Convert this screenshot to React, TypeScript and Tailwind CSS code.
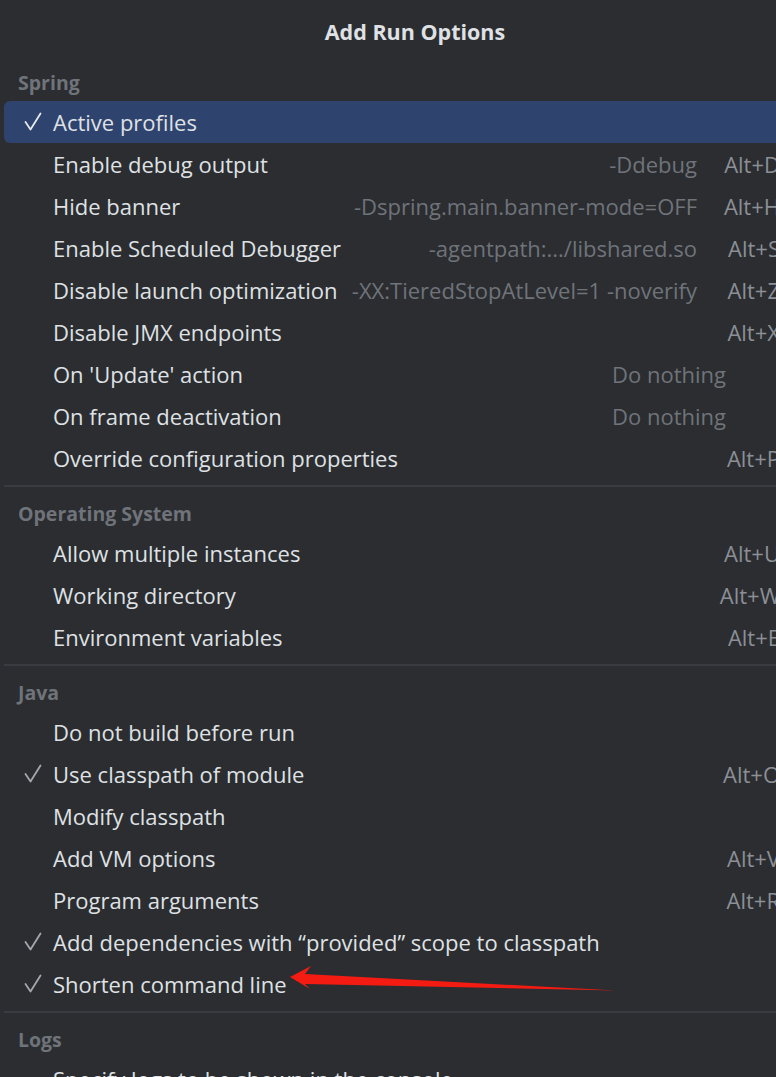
import type { ReactNode } from 'react'

type Item = {
  label: string
  hint?: string
  shortcut?: string
  value?: string
  checked?: boolean
  selected?: boolean
}

type Section = { title: string; items: Item[] }

const sections: Section[] = [
  {
    title: 'Spring',
    items: [
      { label: 'Active profiles', checked: true, selected: true },
      { label: 'Enable debug output', hint: '-Ddebug', shortcut: 'Alt+D' },
      { label: 'Hide banner', hint: '-Dspring.main.banner-mode=OFF', shortcut: 'Alt+H' },
      { label: 'Enable Scheduled Debugger', hint: '-agentpath:.../libshared.so', shortcut: 'Alt+S' },
      { label: 'Disable launch optimization', hint: '-XX:TieredStopAtLevel=1 -noverify', shortcut: 'Alt+Z' },
      { label: 'Disable JMX endpoints', shortcut: 'Alt+X' },
      { label: "On 'Update' action", value: 'Do nothing' },
      { label: 'On frame deactivation', value: 'Do nothing' },
      { label: 'Override configuration properties', shortcut: 'Alt+P' },
    ],
  },
  {
    title: 'Operating System',
    items: [
      { label: 'Allow multiple instances', shortcut: 'Alt+U' },
      { label: 'Working directory', shortcut: 'Alt+W' },
      { label: 'Environment variables', shortcut: 'Alt+E' },
    ],
  },
  {
    title: 'Java',
    items: [
      { label: 'Do not build before run' },
      { label: 'Use classpath of module', checked: true, shortcut: 'Alt+O' },
      { label: 'Modify classpath' },
      { label: 'Add VM options', shortcut: 'Alt+V' },
      { label: 'Program arguments', shortcut: 'Alt+R' },
      { label: 'Add dependencies with \u201Cprovided\u201D scope to classpath', checked: true },
      { label: 'Shorten command line', checked: true },
    ],
  },
  {
    title: 'Logs',
    items: [{ label: 'Specify logs to be shown in the console' }],
  },
]

function Check({ light }: { light?: boolean }) {
  return (
    <svg width="18" height="20" viewBox="0 0 18 20" className="ml-[20px]">
      <polyline
        points="1.5,10 6.5,17.5 16.5,1.5"
        fill="none"
        stroke={light ? '#e6e8ec' : '#a4a7ad'}
        strokeWidth="1.8"
        strokeLinecap="round"
        strokeLinejoin="round"
      />
    </svg>
  )
}

function Row({ item }: { item: Item }) {
  return (
    <div
      className={`ml-[4px] mr-[44px] h-[42px] flex items-center rounded-[6px] ${
        item.selected ? 'bg-[#2e436e]' : ''
      }`}
    >
      <div className="w-[49px] flex items-center">{item.checked && <Check light={item.selected} />}</div>
      <span className="text-[#dfe1e5] whitespace-nowrap">{item.label}</span>
      <div className="flex-1" />
      {item.value ? (
        <span className="text-[#6f737a] whitespace-nowrap mr-[60px]">{item.value}</span>
      ) : (
        <>
          {item.hint && <span className="text-[#6f737a] whitespace-nowrap mr-[3px]">{item.hint}</span>}
          <span className="w-[86px] pr-[6px] text-right text-[#8c8f96] whitespace-nowrap">
            {item.shortcut}
          </span>
        </>
      )}
    </div>
  )
}

function SectionBlock({ section, last }: { section: Section; last: boolean }): ReactNode {
  return (
    <div>
      <div className="h-[43px] pt-[12px] pl-[18px] leading-[26px] text-[19.5px] font-bold text-[#6f737a]">
        {section.title}
      </div>
      {section.items.map(item => (
        <Row key={item.label} item={item} />
      ))}
      {!last && (
        <div className="pt-[6px] pb-[2px]">
          <div className="ml-[4px] h-[2px] bg-[#393b40]" />
        </div>
      )}
    </div>
  )
}

export default function App() {
  return (
    <div
      className="relative min-h-screen h-[1077px] bg-[#2b2d30] overflow-hidden text-[22px]"
      style={{ fontFamily: '"Open Sans", "Noto Sans", sans-serif' }}
    >
      <div className="w-[830px]">
        <div className="h-[58px] pt-[18px] text-center leading-[28px] text-[21.5px] font-bold text-[#dfe1e5]">
          Add Run Options
        </div>
        {sections.map((s, i) => (
          <SectionBlock key={s.title} section={s} last={i === sections.length - 1} />
        ))}
      </div>

      {/* annotation arrow */}
      <svg className="absolute left-0 top-0 pointer-events-none" width="776" height="1077">
        <polygon
          points="290,977 311,966 305,974 616,990.5 305,984 310,989"
          fill="#f41b12"
        />
      </svg>
    </div>
  )
}
